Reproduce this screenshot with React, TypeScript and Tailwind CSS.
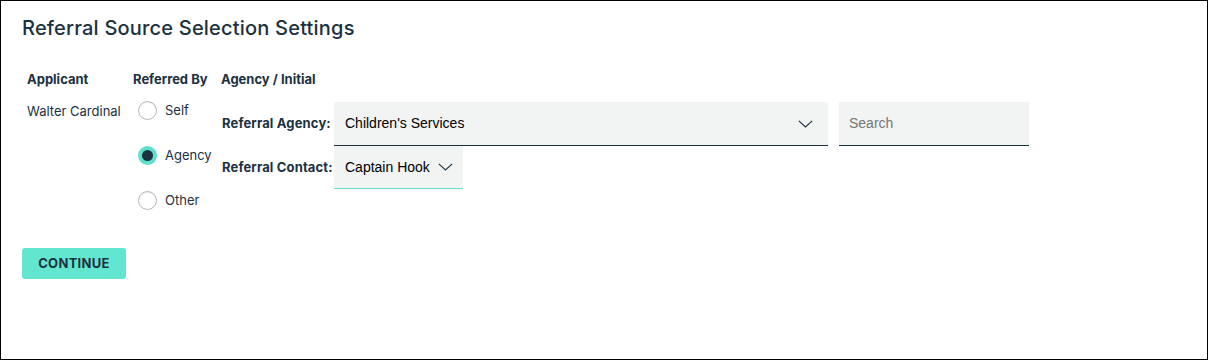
const navy = "#1b3140";

function Chevron() {
  return (
    <svg width="15" height="8" viewBox="0 0 15 8" fill="none" className="shrink-0">
      <path d="M0.8 0.8 L7.5 7 L14.2 0.8" stroke={navy} strokeWidth="1.1" />
    </svg>
  );
}

function Radio({ label, checked }: { label: string; checked?: boolean }) {
  return (
    <div className="flex h-[45px] items-center gap-[8px] pl-[10px]">
      {checked ? (
        <span className="flex h-[19px] w-[19px] items-center justify-center rounded-full bg-[#5fe0cb]">
          <span className="h-[11px] w-[11px] rounded-full bg-[#1b3140]" />
        </span>
      ) : (
        <span className="h-[19px] w-[19px] rounded-full border border-[#b5b9bb] bg-white shadow-[inset_0_1px_1px_rgba(0,0,0,0.08)]" />
      )}
      <span className="text-[13px] text-[#1b3140]">{label}</span>
    </div>
  );
}

export default function App() {
  return (
    <div className="h-[360px] w-[1208px] border border-black bg-white px-[21px] pt-[15px] font-['Inter','Liberation_Sans',sans-serif] text-[#1b3140]">
      <h1 className="text-[20px] font-medium leading-[24px] tracking-[0.2px]">Referral Source Selection Settings</h1>

      <div className="mt-[31px] flex">
        {/* Applicant */}
        <div className="w-[106px] pl-[5px]">
          <div className="text-[13px] font-bold leading-[16px]">Applicant</div>
          <div className="mt-[2px] flex h-[45px] items-center text-[13px]">Walter Cardinal</div>
        </div>

        {/* Referred By */}
        <div className="w-[93px]">
          <div className="pl-[5px] text-[13px] font-bold leading-[16px]">Referred By</div>
          <div className="mt-[1px]">
            <Radio label="Self" />
            <Radio label="Agency" checked />
            <Radio label="Other" />
          </div>
        </div>

        {/* Agency / Initial */}
        <div>
          <div className="text-[13px] font-bold leading-[16px]">Agency / Initial</div>
          <div className="mt-[15px] flex items-center">
            <div className="w-[113px] pl-[1px] text-[13px] font-bold tracking-[0.15px]">Referral Agency:</div>
            <div className="flex h-[44px] w-[494px] items-center justify-between border-b border-[#1b3140] bg-[#f2f4f4] pl-[11px] pr-[15px] font-['Liberation_Sans',sans-serif] text-[14px] text-black">
              <span>Children's Services</span>
              <Chevron />
            </div>
            <div className="ml-[11px] flex h-[44px] w-[190px] items-center border-b border-[#1b3140] bg-[#f2f4f4] pl-[10px] font-['Liberation_Sans',sans-serif] text-[14px] text-[#767676]">
              Search
            </div>
          </div>
          <div className="flex items-center">
            <div className="w-[113px] pl-[1px] text-[13px] font-bold tracking-[0.15px]">Referral Contact:</div>
            <div className="flex h-[43px] w-[129px] items-center gap-[8px] border-b border-[#5fe0cb] bg-[#f2f4f4] pl-[11px] font-['Liberation_Sans',sans-serif] text-[14px] text-black">
              <span>Captain Hook</span>
              <Chevron />
            </div>
          </div>
        </div>
      </div>

      <button className="mt-[25px] h-[31px] w-[104px] rounded-[3px] bg-[#62e6d0] text-[13px] font-bold tracking-[0.3px] text-[#1b3140]">
        CONTINUE
      </button>
    </div>
  );
}
